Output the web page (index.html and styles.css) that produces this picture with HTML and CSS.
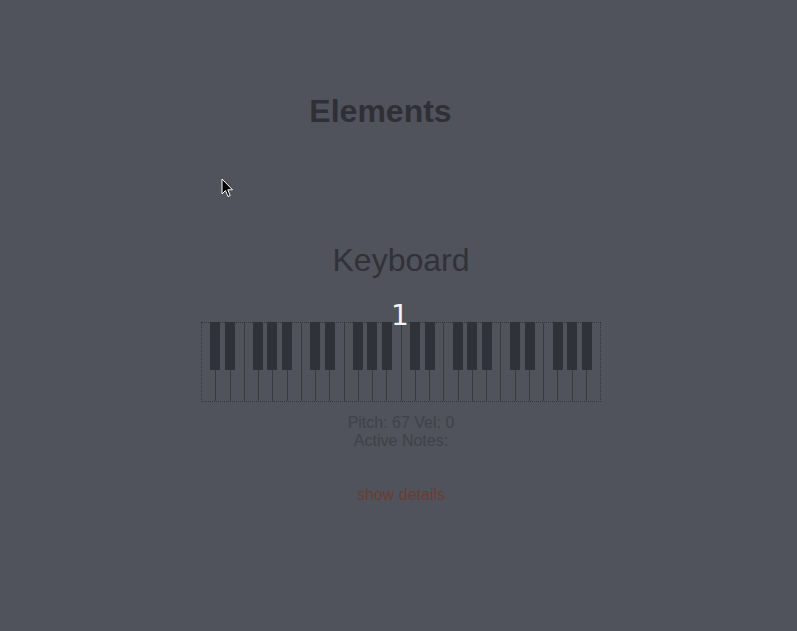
FILE: index.html
```html
<!DOCTYPE html>
<html>
<head>
<meta charset="utf-8">
<link rel="stylesheet" href="styles.css">
</head>
<body>
<div class="page">
  <h1 class="title">Elements</h1>
  <h2 class="section">Keyboard</h2>
  <div class="keyboard">
    <span class="octave">1</span>
    <div class="whites" id="whites"></div>
    <div class="blacks" id="blacks"></div>
  </div>
  <div class="info">
    <div>Pitch: 67 Vel: 0</div>
    <div>Active Notes:</div>
  </div>
  <a class="details">show details</a>
</div>
<svg class="cursor" width="14" height="22" viewBox="0 0 14 22">
  <path d="M1 1 L1 16 L4.5 12.5 L7 18.5 L9.2 17.6 L6.8 11.8 L11.5 11.8 Z" fill="#000" stroke="#fff" stroke-width="1"/>
</svg>
<script>
  var w = document.getElementById('whites');
  for (var i = 0; i < 28; i++) {
    var k = document.createElement('div');
    k.className = 'white';
    w.appendChild(k);
  }
  var b = document.getElementById('blacks');
  var kw = 400 / 28;
  var pattern = [1, 2, 4, 5, 6];
  for (var o = 0; o < 4; o++) {
    pattern.forEach(function (p) {
      var x = (o * 7 + p) * kw - 5;
      var d = document.createElement('div');
      d.className = 'black';
      d.style.left = x.toFixed(2) + 'px';
      b.appendChild(d);
    });
  }
</script>
</body>
</html>
```

FILE: styles.css
```css
html, body {
  margin: 0;
  padding: 0;
  background: #50535b;
  height: 100%;
}
body {
  font-family: "Liberation Sans", Arial, sans-serif;
  position: relative;
  overflow: hidden;
}
.page {
  display: flex;
  flex-direction: column;
  align-items: center;
  padding-top: 93px;
  padding-left: 5px;
}
.title {
  margin: 0 41px 0 0;
  font-size: 32px;
  line-height: 36px;
  font-weight: bold;
  color: #2e3036;
}
.section {
  margin: 113px 0 0 0;
  font-size: 32px;
  line-height: 36px;
  font-weight: normal;
  color: #303238;
}
.keyboard {
  position: relative;
  margin-top: 44px;
  width: 400px;
  height: 80px;
}
.whites {
  display: flex;
  width: 400px;
  height: 80px;
  box-sizing: border-box;
  border: 1px dotted #34363c;
}
.white {
  flex: 1;
  border-right: 1px solid #383a40;
}
.white:last-child {
  border-right: none;
}
.blacks {
  position: absolute;
  left: 0;
  top: 0;
  width: 400px;
  height: 48px;
}
.black {
  position: absolute;
  top: 0;
  width: 10px;
  height: 48px;
  background: #2f3239;
}
.octave {
  position: absolute;
  left: 190px;
  top: -22px;
  z-index: 2;
  font-family: "DejaVu Sans", sans-serif;
  font-size: 28px;
  line-height: 32px;
  color: #f2f2f2;
}
.info {
  margin-top: 12px;
  text-align: center;
  font-size: 16px;
  line-height: 18px;
  color: #3f4248;
}
.details {
  margin-top: 36px;
  font-size: 16px;
  line-height: 18px;
  color: #6b3d31;
}
.cursor {
  position: absolute;
  left: 221px;
  top: 178px;
}
```
